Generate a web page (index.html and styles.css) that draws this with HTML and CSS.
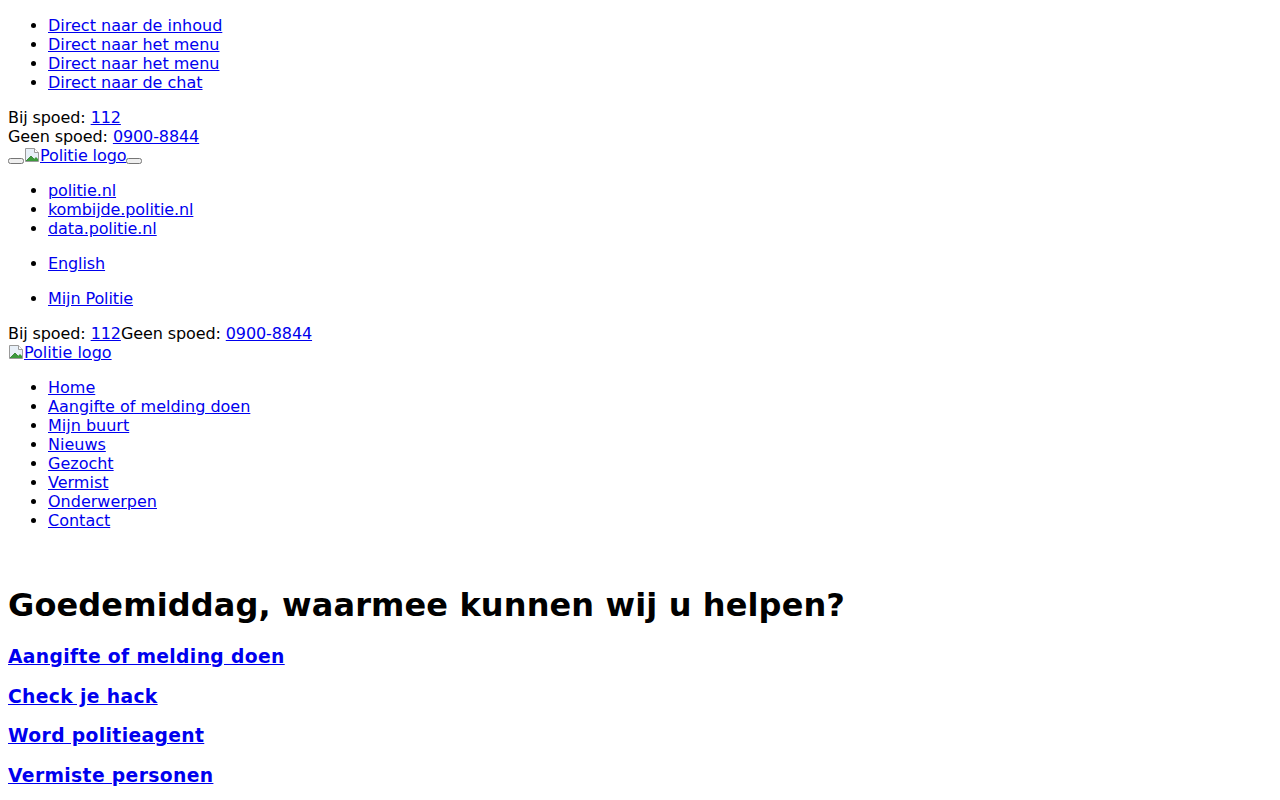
FILE: index.html
```html
<!DOCTYPE html>
<html lang="nl">
<head>
  <meta charset="UTF-8">
  <title>Politie.nl</title>
  <link rel="stylesheet" href="styles.css">
</head>
<body>

<!-- skiplinks -->
<ul class="skiplinks">
  <li><a href="#inhoud">Direct naar de inhoud</a></li>
  <li><a href="#menu">Direct naar het menu</a></li>
  <li><a href="#menu-mobiel">Direct naar het menu</a></li>
  <li><a href="#chat">Direct naar de chat</a></li>
</ul>

<header class="header-mobiel">
  <p class="spoed">
    Bij spoed: <a href="tel:112">112</a><br>
    Geen spoed: <a href="tel:09008844">0900-8844</a><br>
    <button type="button"></button><a href="/"><span class="logo-missing"><svg width="16" height="16" viewBox="0 0 16 16"><path d="M1.5 1.5h9l4 4v9h-13z" fill="#e8f0f8" stroke="#9a9a9a"/><path d="M10.5 1.5v4h4" fill="#fff" stroke="#9a9a9a"/><path d="M2 14l5-5 3 3 2-2 2 2v2H2z" fill="#3c9a3c"/><path d="M2 14l5-5 3 3" fill="none" stroke="#2a7a2a" stroke-width=".8"/></svg>Politie logo</span></a><button type="button"></button>
  </p>

  <ul>
    <li><a href="/">politie.nl</a></li>
    <li><a href="/kombijde">kombijde.politie.nl</a></li>
    <li><a href="/data">data.politie.nl</a></li>
  </ul>

  <ul>
    <li><a href="/en">English</a></li>
  </ul>

  <ul>
    <li><a href="/mijn-politie">Mijn Politie</a></li>
  </ul>
</header>

<header class="header-desktop">
  <div class="spoed">Bij spoed: <a href="tel:112">112</a>Geen spoed: <a href="tel:09008844">0900-8844</a></div>
  <div><a href="/"><span class="logo-missing"><svg width="16" height="16" viewBox="0 0 16 16"><path d="M1.5 1.5h9l4 4v9h-13z" fill="#e8f0f8" stroke="#9a9a9a"/><path d="M10.5 1.5v4h4" fill="#fff" stroke="#9a9a9a"/><path d="M2 14l5-5 3 3 2-2 2 2v2H2z" fill="#3c9a3c"/><path d="M2 14l5-5 3 3" fill="none" stroke="#2a7a2a" stroke-width=".8"/></svg>Politie logo</span></a></div>

  <ul id="menu">
    <li><a href="/">Home</a></li>
    <li><a href="/aangifte-of-melding-doen">Aangifte of melding doen</a></li>
    <li><a href="/mijn-buurt">Mijn buurt</a></li>
    <li><a href="/nieuws">Nieuws</a></li>
    <li><a href="/gezocht">Gezocht</a></li>
    <li><a href="/vermist">Vermist</a></li>
    <li><a href="/onderwerpen">Onderwerpen</a></li>
    <li><a href="/contact">Contact</a></li>
  </ul>
</header>

<div class="kruimelpad"><br></div>

<main id="inhoud">
  <h1>Goedemiddag, waarmee kunnen wij u helpen?</h1>
  <h3><a href="/aangifte-of-melding-doen">Aangifte of melding doen</a></h3>
  <h3><a href="/checkjehack">Check je hack</a></h3>
  <h3><a href="/werken-bij">Word politieagent</a></h3>
  <h3><a href="/vermist">Vermiste personen</a></h3>
</main>

</body>
</html>
```

FILE: styles.css
```css
body { font-family: "DejaVu Sans", sans-serif; font-size: 16px; background-color: #fff; color: #000; margin: 0 8px 8px; }
a { color: #0000ee; }

.header-mobiel, .header-desktop .spoed { letter-spacing: -0.1px; }

h1 { letter-spacing: 0.12px; }
h3 { letter-spacing: 0.37px; }

.logo-missing svg {
  vertical-align: -2px;
}
```
